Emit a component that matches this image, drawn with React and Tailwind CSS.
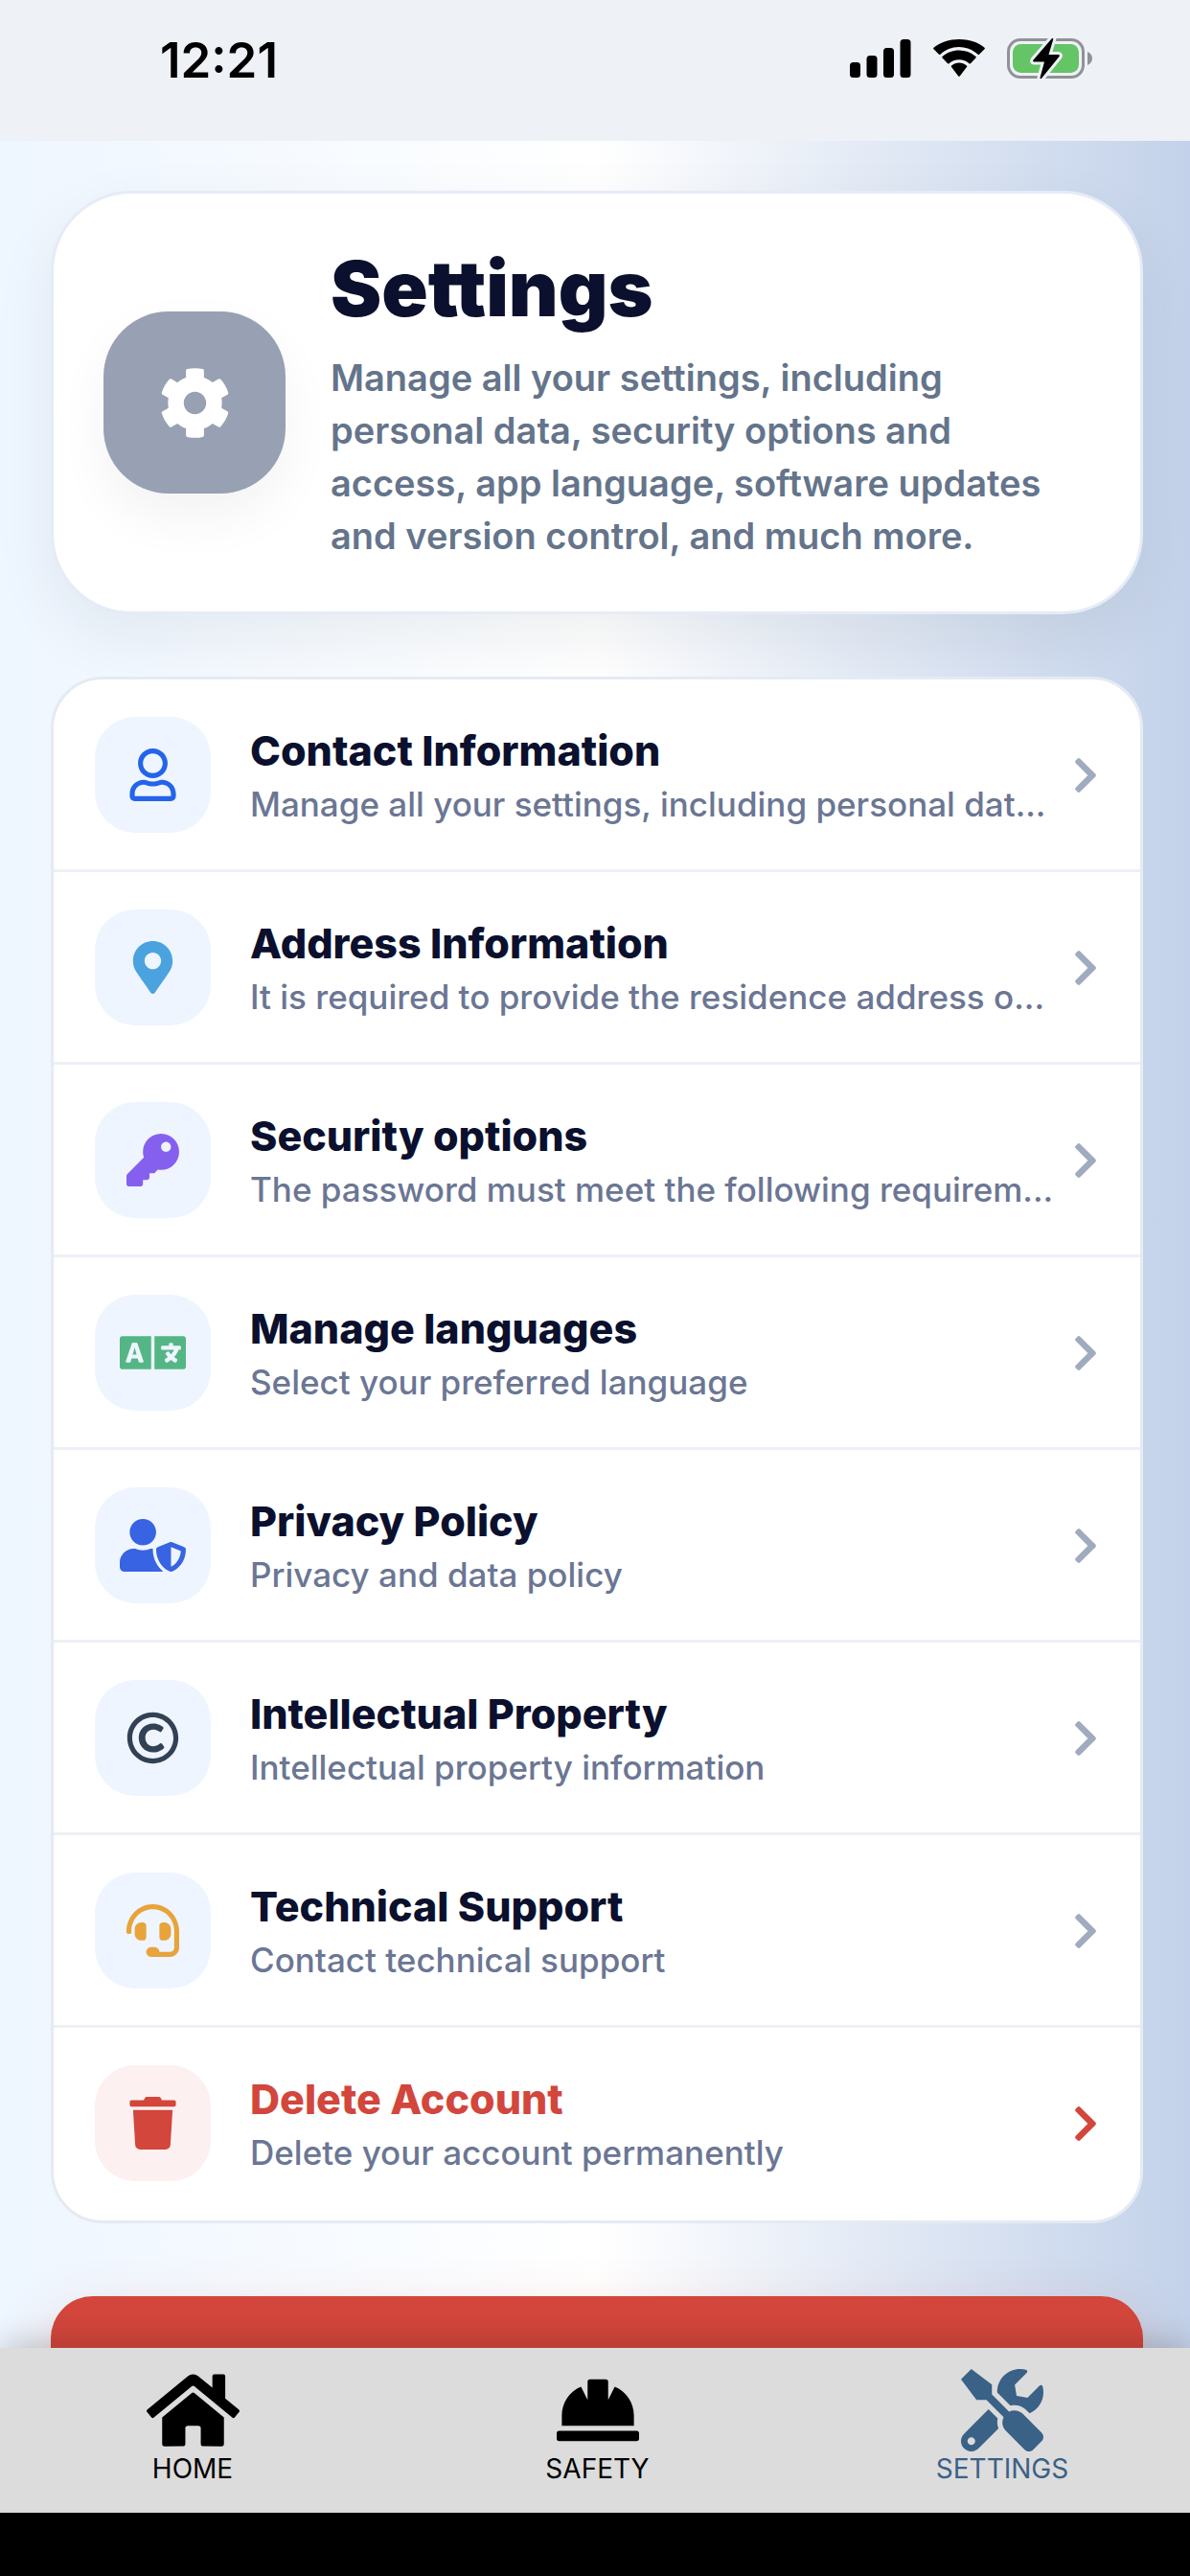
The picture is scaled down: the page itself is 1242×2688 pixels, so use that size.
import React from 'react';
import {
    FaChevronRight,
    FaCog,
    FaHardHat,
    FaHeadset,
    FaHome,
    FaKey,
    FaLanguage,
    FaMapMarkerAlt,
    FaRegCopyright,
    FaRegUser,
    FaTools,
    FaTrash,
    FaUserShield,
} from 'react-icons/fa';

const menuItems = [
    { title: 'Contact Information', text: 'Manage all your settings, including personal dat...', icon: FaRegUser, look: 'size-[55px] text-[#2563eb]' },
    { title: 'Address Information', text: 'It is required to provide the residence address o...', icon: FaMapMarkerAlt, look: 'size-[55px] text-[#4aa3df]' },
    { title: 'Security options', text: 'The password must meet the following requirem...', icon: FaKey, look: 'size-[55px] text-[#8560ee]' },
    { title: 'Manage languages', text: 'Select your preferred language', icon: FaLanguage, look: 'size-[69px] text-[#55b685]' },
    { title: 'Privacy Policy', text: 'Privacy and data policy', icon: FaUserShield, look: 'size-[69px] text-[#3863e3]' },
    { title: 'Intellectual Property', text: 'Intellectual property information', icon: FaRegCopyright, look: 'size-[55px] text-[#334155]' },
    { title: 'Technical Support', text: 'Contact technical support', icon: FaHeadset, look: 'size-[55px] text-[#e8a33b]' },
    { title: 'Delete Account', text: 'Delete your account permanently', icon: FaTrash, look: 'size-[55px] text-[#d2463c]', danger: true },
];

const tabs = [
    { label: 'HOME', icon: FaHome, iconWidth: 'w-[97px]' },
    { label: 'SAFETY', icon: FaHardHat, iconWidth: 'w-[86px]' },
    { label: 'SETTINGS', icon: FaTools, iconWidth: 'w-[86px]', active: true },
];

const StatusBar = () => (
    <div className="flex h-[147px] shrink-0 justify-between bg-[#eef2f7] pt-9 pr-[101px] pl-[167px]">
        <span className="text-[51px] leading-[54px] font-semibold text-black">12:21</span>
        <div className="flex h-[50px] items-center gap-[22px]">
            <svg viewBox="0 0 64 40" className="h-10 w-16">
                <rect x="0" y="24" width="11" height="16" rx="3.5" />
                <rect x="17.5" y="17" width="11" height="23" rx="3.5" />
                <rect x="35" y="9" width="11" height="31" rx="3.5" />
                <rect x="52.5" y="0" width="11" height="40" rx="3.5" />
            </svg>
            <svg viewBox="0 0 56 40" className="h-10 w-14">
                <path d="M28 8c7.600 0 14.500 3 19.600 7.800.4.400 1 .4 1.400 0l5.500-5.500c.5-.5.5-1.200 0-1.600C47.500 2.900 38.200 0 28 0S8.500 2.900 1.500 8.700c-.5.400-.5 1.100 0 1.600L7 15.800c.4.400 1 .4 1.400 0C13.500 11 20.400 8 28 8z" />
                <path d="M28 21.200c4 0 7.700 1.500 10.500 4 .4.400 1 .4 1.400 0l5.500-5.600c.5-.5.5-1.200 0-1.600C40.700 13.700 34.700 11.400 28 11.400S15.300 13.700 10.600 18c-.5.400-.5 1.100 0 1.600l5.500 5.600c.4.400 1 .4 1.400 0 2.800-2.500 6.500-4 10.500-4z" />
                <path d="M35.900 29.100c.5-.5.5-1.200 0-1.600-2.200-1.800-5-2.900-7.900-2.900s-5.700 1.100-7.900 2.900c-.5.400-.5 1.100 0 1.600l7.200 9.300c.4.400 1 .4 1.400 0z" />
            </svg>
            <svg viewBox="0 0 90 44" className="h-11 w-[90px]">
                <rect x="1.500" y="2.500" width="78" height="39" rx="12.500" fill="none" stroke="#909296" strokeWidth="3" />
                <path d="M84 15v14c3-1.200 5-4 5-7s-2-5.800-5-7z" fill="#909296" />
                <rect x="6" y="7" width="69" height="30" rx="8.500" fill="#65c466" />
                <path
                    d="M46.500 1.500 27.500 23.500c-.8 1-.4 2 .8 2H39l-4.500 16.500c-.2 1.200 1 1.600 1.800.6L54.500 20c.8-1 .4-2-.8-2H43.500L48.200 2.200c.3-1.200-.9-1.600-1.700-.7z"
                    fill="#000"
                    stroke="#eef2f7"
                    strokeWidth="6"
                    strokeLinejoin="round"
                    paintOrder="stroke"
                />
            </svg>
        </div>
    </div>
);

const HeaderCard = () => (
    <section className="flex items-center gap-[47px] rounded-[84px] border-[3px] border-[#e5ecf7] bg-white px-[52px] py-[51px] shadow-[0_24px_66px_rgba(15,23,42,0.07)]">
        <div className="flex size-[190px] shrink-0 items-center justify-center rounded-[68px] bg-[#98a1b3] shadow-[0_24px_54px_rgba(15,23,42,0.05)]">
            <FaCog className="size-[75px] text-white" />
        </div>
        <div className="min-w-0 flex-1">
            <h1 className="text-[80px] leading-[96px] font-black text-[#0a102d]">Settings</h1>
            <p className="mt-[18px] text-[38px] leading-[55px] font-semibold text-[#64748b]">
                Manage all your settings, including
                <br />
                personal data, security options and
                <br />
                access, app language, software updates
                <br />
                and version control, and much more.
            </p>
        </div>
    </section>
);

const MenuRow = ({ item }) => {
    const Icon = item.icon;

    return (
        <li className="border-b-[3px] border-[#edf0f6] last:border-transparent">
            <button type="button" className="flex w-full items-center pt-[39px] pr-9 pb-[38px] pl-[43px] text-left">
                <span
                    className={`mr-[41px] flex size-[121px] shrink-0 items-center justify-center rounded-[42px] ${
                        item.danger ? 'bg-[#fcf0f0]' : 'bg-[#eef5ff]'
                    }`}
                >
                    <Icon className={item.look} />
                </span>
                <span className="min-w-0 flex-1 pt-0.5 whitespace-nowrap">
                    <span className={`block text-[43px] leading-[58px] font-extrabold ${item.danger ? 'text-[#d2463c]' : 'text-[#0a102d]'}`}>
                        {item.title}
                    </span>
                    <span className="block text-[35px] leading-[54px] font-medium text-[#6b7694]">{item.text}</span>
                </span>
                <FaChevronRight className={`h-[42px] w-auto shrink-0 ${item.danger ? 'text-[#d2463c]' : 'text-[#a0abc0]'}`} />
            </button>
        </li>
    );
};

const TabBar = () => (
    <nav className="relative flex h-[172px] shrink-0 justify-between bg-[#dcdcdc] pt-[22px] pr-[75px] pl-20 shadow-[0_-6px_30px_rgba(0,0,0,0.18)]">
        {tabs.map(({ label, icon: Icon, iconWidth, active }) => (
            <a
                key={label}
                href={`#${label.toLowerCase()}`}
                className={`flex w-[242px] flex-col items-center ${active ? 'text-[#3a6186]' : 'text-black'}`}
            >
                <Icon className={`h-[86px] ${iconWidth}`} />
                <span className="text-[28px] leading-9">{label}</span>
            </a>
        ))}
    </nav>
);

const App = () => (
    <div className="flex h-screen flex-col overflow-hidden bg-black font-[Inter,sans-serif]">
        <StatusBar />

        <main className="min-h-0 flex-1 overflow-hidden bg-linear-to-r from-[#eef6ff] via-white to-[#c3d2ea] pt-[52px] pr-[49px] pl-[53px]">
            <HeaderCard />

            <ul className="mt-[65px] overflow-hidden rounded-[54px] border-[3px] border-[#e5eaf3] bg-white">
                {menuItems.map((item) => (
                    <MenuRow key={item.title} item={item} />
                ))}
            </ul>

            <button
                type="button"
                aria-label="Log out"
                className="mt-[76px] block h-[156px] w-full rounded-[44px] bg-[#d2463c] shadow-[0_24px_60px_rgba(210,70,60,0.25)]"
            />
        </main>

        <TabBar />
        <div className="h-[66px] shrink-0 bg-black" />
    </div>
);

export default App;
